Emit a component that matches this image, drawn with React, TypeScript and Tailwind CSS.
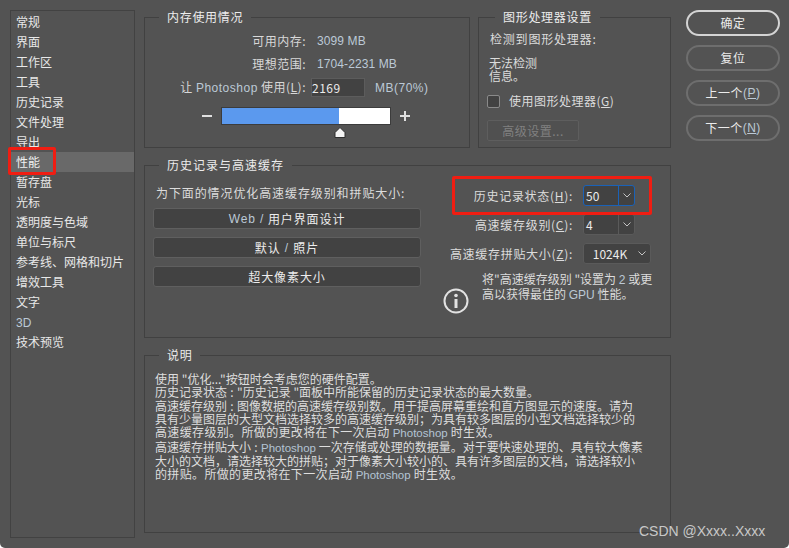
import React from 'react';

const FONT = '"Noto Sans CJK SC", "Liberation Sans", sans-serif';

const navItems = ['常规', '界面', '工作区', '工具', '历史记录', '文件处理', '导出', '性能', '暂存盘', '光标', '透明度与色域', '单位与标尺', '参考线、网格和切片', '增效工具', '文字', '3D', '技术预览'];

const Latin: React.FC<{ children: React.ReactNode }> = ({ children }) => (
    <span className="text-[#bcc9d6] font-['Liberation_Sans','DejaVu_Sans',sans-serif]">{children}</span>
);

// slightly smaller product name inside the description block
const DescLatin: React.FC<{ children: React.ReactNode }> = ({ children }) => (
    <span className="text-[11.5px] leading-none tracking-normal text-[#b4c4d4] font-['Liberation_Sans','DejaVu_Sans',sans-serif]">{children}</span>
);

// narrow punctuation slots used in the description text
const Colon = () => <span className="inline-block w-[10px] leading-none text-center">:</span>;
const Semi = () => <span className="inline-block w-[12px] leading-none text-center">{'\uFF1B'}</span>;
const Comma = () => <span className="inline-block w-[12px] leading-none text-center">{'\uFF0C'}</span>;

const Box: React.FC<{ title: string; className?: string; titleClass?: string; children: React.ReactNode }> = ({ title, className, titleClass, children }) => (
    <fieldset className={`border border-[#414141] min-w-0 ${className ?? ''}`}>
        <legend className={`px-[8px] h-[14px] text-[12px] leading-[14px] text-[#ececec] ${titleClass ?? 'ml-[14px] tracking-[0.7px]'}`}>{title}</legend>
        {children}
    </fieldset>
);

const WideButton: React.FC<{ children: React.ReactNode }> = ({ children }) => (
    <div className="h-[21px] rounded-[3px] bg-[#424242] border border-[#5f5f5f] flex items-center justify-center text-[12px] tracking-[0.9px] text-[#ececec]">{children}</div>
);

const Select: React.FC<{ value: string; active?: boolean; wide?: boolean }> = ({ value, active, wide }) => (
    <div className={`flex h-[21px] rounded-[3px] bg-[#424242] border text-[12px] text-[#ececec] ${active ? 'border-[#1a62b8]' : 'border-[#5a5a5a]'} ${wide ? 'w-[68px]' : 'w-[52px]'}`}>
        <span className={`flex-1 leading-[19px] ${wide ? 'text-center pl-[2px]' : 'pl-[2px]'}`}>{value}</span>
        <span className={`w-[16px] flex items-center justify-center ${wide ? '' : active ? 'border-l border-[#1a62b8]' : 'border-l border-[#5a5a5a]'}`}>
            <svg width="8" height="5" viewBox="0 0 8 5" fill="none" stroke="#c4c4c4"><path d="M0.5 0.5 L4 4 L7.5 0.5" /></svg>
        </span>
    </div>
);

const RoundButton: React.FC<{ primary?: boolean; children: React.ReactNode }> = ({ primary, children }) => (
    <div className={`h-[26px] rounded-full flex items-center justify-center text-[12px] tracking-[0.5px] text-[#ececec] ${primary ? 'border-2 border-[#d4d4d4]' : 'border-2 border-[#6e6e6e]'}`}>{children}</div>
);

const descLines: React.ReactNode[] = [
    <>使用 "优化..."按钮时会考虑您的硬件配置。</>,
    <>历史记录状态<Colon />"历史记录 "面板中所能保留的历史记录状态的最大数量。</>,
    <>高速缓存级别<Colon />图像数据的高速缓存级别数。用于提高屏幕重绘和直方图显示的速度。请为</>,
    <>具有少量图层的大型文档选择较多的高速缓存级别<Semi />为具有较多图层的小型文档选择较少的</>,
    <span className="tracking-[0.35px]">高速缓存级别。所做的更改将在下一次启动 <DescLatin>Photoshop</DescLatin> 时生效。</span>,
    <>高速缓存拼贴大小<Colon /><DescLatin>Photoshop</DescLatin> 一次存储或处理的数据量。对于要快速处理的、具有较大像素</>,
    <>大小的文档<Comma />请选择较大的拼贴<Semi />对于像素大小较小的、具有许多图层的文档<Comma />请选择较小</>,
    <span className="tracking-[0.35px]">的拼贴。所做的更改将在下一次启动 <DescLatin>Photoshop</DescLatin> 时生效。</span>,
];

export default function App() {
    return (
        <div className="relative w-[789px] h-[548px] overflow-hidden bg-[#535353] rounded-b-[5px] flex gap-[9px] pl-[10px] pt-[10px] text-[#e4e4e4]" style={{ fontFamily: FONT }}>
            {/* Left nav */}
            <div className="w-[125px] h-[528px] border border-[#424242] pt-[1px] shrink-0">
                {navItems.map(item => (
                    <div key={item} className={`h-[20px] pl-[5px] text-[12px] leading-[19px] ${item === '性能' ? 'bg-[#696969] text-[#f0f0f0]' : 'text-[#e8e8e8]'}`}>
                        {item === '3D' ? <Latin>3D</Latin> : item}
                    </div>
                ))}
            </div>

            {/* Settings */}
            <div className="w-[527px] shrink-0 flex flex-col gap-[10px]">
                <div className="flex gap-[8px]">
                    <Box title="内存使用情况" className="w-[326px] h-[138px]">
                        <div className="pt-[5px] text-[12px] tracking-[0.5px] text-[#d8d8d8]">
                            <div className="flex h-[23px] items-center">
                                <span className="w-[161px] text-right">可用内存:</span>
                                <span className="ml-[11px] tracking-[0.1px]"><Latin>3099 MB</Latin></span>
                            </div>
                            <div className="flex h-[23px] items-center">
                                <span className="w-[161px] text-right">理想范围:</span>
                                <span className="ml-[11px] tracking-[0.1px]"><Latin>1704-2231 MB</Latin></span>
                            </div>
                            <div className="flex h-[24px] items-center">
                                <span className="w-[161px] text-right whitespace-nowrap">让 <Latin>Photoshop</Latin> 使用(<u>L</u>):</span>
                                <span className="ml-[5px] w-[54px] h-[19px] bg-[#424242] border border-[#5c5c5c] leading-[17px] text-[#ececec]">2169</span>
                                <span className="ml-[10px]"><Latin>MB(70%)</Latin></span>
                            </div>
                            <div className="flex items-center mt-[8px] ml-[57px]">
                                <span className="w-[10px] h-[2px] bg-[#e0e0e0]" />
                                <div className="relative ml-[9px] w-[170px] h-[18px] bg-white border border-[#3c3c3c]">
                                    <div className="h-full w-[117px] bg-[#5b99ee]" />
                                    <svg className="absolute left-[112px] top-[19px]" width="12" height="11" viewBox="0 0 12 11"><path d="M6 0.5 L11 5.5 V10.5 H1 V5.5 Z" fill="#f4f4f4" stroke="#2e2e2e" strokeLinejoin="round" /></svg>
                                </div>
                                <svg className="ml-[9px]" width="10" height="10" viewBox="0 0 10 10"><path d="M5 0 V10 M0 5 H10" stroke="#e0e0e0" strokeWidth="2" /></svg>
                            </div>
                        </div>
                    </Box>
                    <Box title="图形处理器设置" className="w-[193px] h-[138px]" titleClass="ml-[16px] tracking-[0.7px]">
                        <div className="pl-[10px] pt-[5px] text-[12px] text-[#dcdcdc]">
                            <div className="h-[20px] leading-[20px] tracking-[0.8px] pl-[1px]">检测到图形处理器:</div>
                            <div className="mt-[7px] leading-[13px]">无法检测<br />信息。</div>
                            <div className="flex items-center mt-[10px] ml-[-2px]">
                                <span className="w-[13px] h-[13px] rounded-[2px] border border-[#8a8a8a] bg-[#424242]" />
                                <span className="ml-[9px] tracking-[0.5px]">使用图形处理器(<u>G</u>)</span>
                            </div>
                            <div className="mt-[10px] ml-[-2px] w-[92px] h-[21px] rounded-[2px] border border-[#5e5e5e] bg-[#505050] flex items-center justify-center text-[#808080] tracking-[0.5px]">高级设置...</div>
                        </div>
                    </Box>
                </div>

                <Box title="历史记录与高速缓存" className="h-[180px]" titleClass="ml-[14px] tracking-[1px]">
                    <div className="flex pt-[12px]">
                        <div className="w-[268px] ml-[8px] flex flex-col">
                            <div className="h-[24px] ml-[3px] text-[12px] leading-[18px] tracking-[0.9px] whitespace-nowrap text-[#dcdcdc]">为下面的情况优化高速缓存级别和拼贴大小:</div>
                            <div className="flex flex-col gap-[8px]">
                                <WideButton><Latin>Web /</Latin>&nbsp;用户界面设计</WideButton>
                                <WideButton>默认 <Latin>&nbsp;/&nbsp;</Latin> 照片</WideButton>
                                <WideButton>超大像素大小</WideButton>
                            </div>
                        </div>
                        <div className="flex-1 flex flex-col text-[12px] text-[#dcdcdc]">
                            <div className="flex items-center justify-end h-[21px] mt-[1px]">
                                <span className="tracking-[0.7px]">历史记录状态(<u>H</u>):</span>
                                <span className="ml-[10px] w-[87px]"><Select value="50" active /></span>
                            </div>
                            <div className="flex items-center justify-end h-[21px] mt-[8px]">
                                <span className="tracking-[0.7px]">高速缓存级别(<u>C</u>):</span>
                                <span className="ml-[10px] w-[87px]"><Select value="4" /></span>
                            </div>
                            <div className="flex items-center justify-end h-[21px] mt-[8px]">
                                <span className="tracking-[0.7px]">高速缓存拼贴大小(<u>Z</u>):</span>
                                <span className="ml-[10px] w-[87px]"><Select value="1024K" wide /></span>
                            </div>
                            <div className="flex mt-[8px] ml-[22px]">
                                <svg className="mt-[16px] shrink-0" width="26" height="26" viewBox="0 0 26 26" fill="none">
                                    <circle cx="13" cy="13" r="11.5" stroke="#e2e2e2" strokeWidth="2" />
                                    <circle cx="13" cy="7.5" r="1.8" fill="#e2e2e2" />
                                    <path d="M13 11 V20" stroke="#e2e2e2" strokeWidth="3" />
                                </svg>
                                <div className="ml-[13px] text-[12px] leading-[13px] whitespace-nowrap">
                                    将"高速缓存级别 "设置为 <Latin>2</Latin> 或更<br />高以获得最佳的 <Latin>GPU</Latin> 性能。
                                </div>
                            </div>
                        </div>
                    </div>
                </Box>

                <Box title="说明" className="h-[185px]">
                    <div className="pl-[10px] pt-[10px] text-[12px] leading-[13.3px] text-[#dedede] whitespace-nowrap">
                        {descLines.map((line, i) => <div key={i}>{line}</div>)}
                    </div>
                </Box>
            </div>

            {/* Dialog buttons */}
            <div className="ml-[6px] w-[94px] shrink-0 flex flex-col gap-[9px]">
                <RoundButton primary>确定</RoundButton>
                <RoundButton>复位</RoundButton>
                <RoundButton>上一个<Latin>(<u>P</u>)</Latin></RoundButton>
                <RoundButton>下一个<Latin>(<u>N</u>)</Latin></RoundButton>
            </div>

            {/* Annotation boxes */}
            <div className="absolute left-[8px] top-[147px] w-[48px] h-[28px] border-[3px] border-[#f01d12] rounded-[2px]" />
            <div className="absolute left-[452px] top-[176px] w-[200px] h-[39px] border-[3px] border-[#f01d12] rounded-[2px]" />

            {/* Watermark */}
            <div className="absolute left-[639px] top-[522px] text-[14px] leading-[18px] text-[#c8c8c8] font-['Liberation_Sans',sans-serif]">CSDN @Xxxx..Xxxx</div>
        </div>
    );
}
